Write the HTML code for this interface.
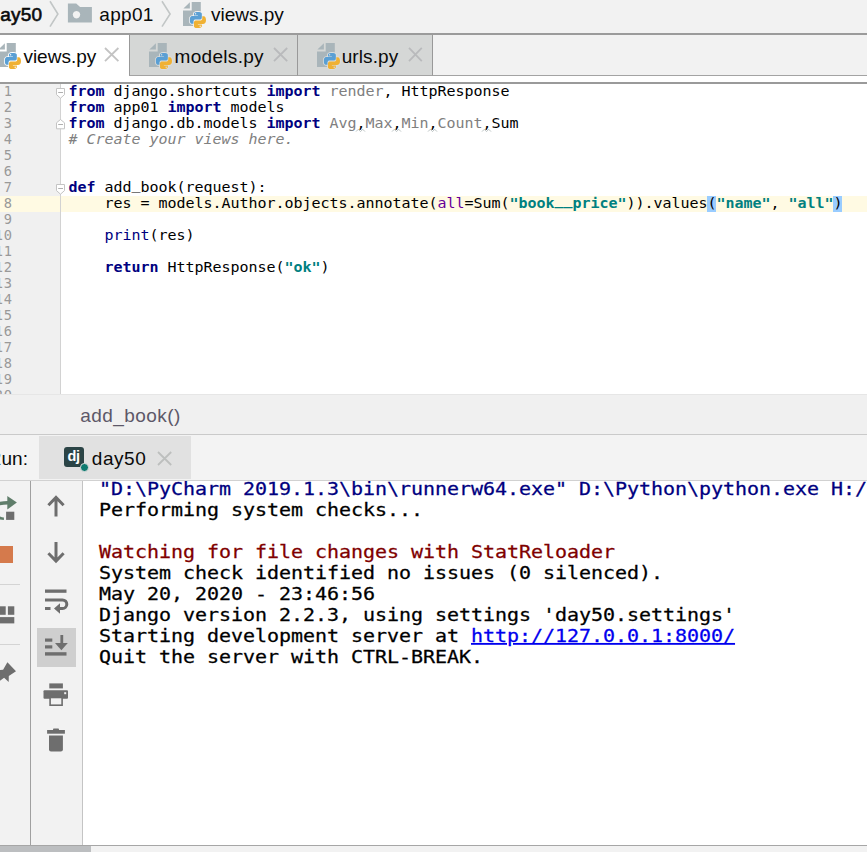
<!DOCTYPE html>
<html><head><meta charset="utf-8"><title>views.py</title>
<style>
*{box-sizing:border-box;margin:0;padding:0}
html,body{width:867px;height:852px;overflow:hidden;background:#fff}
body{position:relative;font-family:"Liberation Sans",sans-serif;color:#000}
.abs{position:absolute}
.ui{font-family:"Liberation Sans",sans-serif;font-size:19px;white-space:pre;line-height:24px;color:#0a0a0a}
.mono{font-family:"DejaVu Sans Mono","Liberation Mono",monospace;white-space:pre}
#nav{left:0;top:0;width:867px;height:33px;background:#f2f2f2}
#navline{left:0;top:33px;width:867px;height:1.7px;background:#9b9b9b}
#strip{left:129px;top:34.7px;width:738px;height:41.3px;background:#f2f2f2;border-bottom:1px solid #a3a3a3}
.tab{top:34.7px;height:41.3px;background:#d5d7d6;border-right:1.2px solid #999;border-bottom:1px solid #a3a3a3}
#edline{left:0;top:82px;width:867px;height:1.7px;background:#9a9a9a}
#gutter{left:0;top:84px;width:60px;height:310px;background:#f0f0f0}
#gline{left:60px;top:83.7px;width:1px;height:310.3px;background:#d2d2d2}
#caret{left:0;top:196px;width:867px;height:16px;background:#fffae3}
.ln{left:-5px;width:18px;text-align:left;font-size:13.7px;letter-spacing:0.75px;line-height:16px;color:#999;height:16px}
.cl{left:68.4px;font-size:15px;line-height:16px;height:16px;color:#000;letter-spacing:-0.031px;transform:scaleY(0.94);transform-origin:0 13.2px}
.k{color:#000080;font-weight:bold}
.s{color:#008080;font-weight:bold}
.g{color:#808080}
.c{color:#808080;font-style:italic}
.p{color:#660099}
.b{color:#000080}
.u{position:relative;top:-3px}
.brk{top:196px;width:9px;height:16px;background:#99ccff}
#crumb{left:0;top:394px;width:867px;height:40px;background:#f0f0f0;border-top:1px solid #e6e6e6}
#crumbline{left:0;top:434px;width:867px;height:1px;background:#cacaca}
#runbar{left:0;top:435px;width:867px;height:45px;background:#f3f3f3}
#runtab{left:39px;top:436.2px;width:152px;height:42.4px;background:#e1e1e1}
#runline{left:0;top:480px;width:867px;height:1px;background:#d1d1d1}
#lt1{left:0;top:481px;width:30px;height:364px;background:#f2f2f2}
#lt1b{left:30px;top:481px;width:1px;height:364px;background:#a0a0a0}
#lt2{left:31px;top:481px;width:51px;height:364px;background:#f2f2f2}
#lt2b{left:82px;top:481px;width:1px;height:364px;background:#c4c4c4}
.con{left:99px;font-size:20px;line-height:21px;height:21px;letter-spacing:-0.041px;color:#000;transform:scaleY(0.92);transform-origin:0 17.4px;-webkit-text-stroke:0.3px}
#botline{left:0;top:845px;width:867px;height:1px;background:#a6a6a6}
#bot{left:0;top:846px;width:867px;height:6px;background:#f2f2f2}
#botl{left:0;top:846px;width:91px;height:6px;background:#bcbec0}
</style></head><body>
<div id="nav" class="abs"></div>
<div id="strip" class="abs"></div>
<div id="navline" class="abs"></div>
<div class="abs tab" style="left:129px;width:169px;border-left:1.2px solid #999"></div>
<div class="abs tab" style="left:298px;width:135px"></div>
<div id="edline" class="abs"></div>
<div id="gutter" class="abs"></div>
<div id="caret" class="abs"></div>
<div id="gline" class="abs"></div>
<div class="abs brk" style="left:707.3px"></div><div class="abs brk" style="left:833.2px"></div>
<div class="abs ui" id="t_day" style="left:-10.6px;top:3px;-webkit-text-stroke:0.6px;letter-spacing:0.25px">day50</div>
<div class="abs ui" id="t_app" style="left:99.3px;top:3px;letter-spacing:0.3px">app01</div>
<div class="abs ui" id="t_vw" style="left:211px;top:3px">views.py</div>
<div class="abs ui" id="t_tab1" style="left:23.4px;top:45px">views.py</div>
<div class="abs ui" id="t_tab2" style="left:174.6px;top:45px;letter-spacing:0.3px">models.py</div>
<div class="abs ui" id="t_tab3" style="left:341.7px;top:45px;letter-spacing:0.1px">urls.py</div>
<div id="editor" class="abs" style="left:0;top:84px;width:867px;height:310px;overflow:hidden"><div class="abs" style="left:0;top:-84px"><div class="abs mono ln" style="top:83px;left:3.7px">1</div>
<div class="abs mono ln" style="top:99px;left:3.7px">2</div>
<div class="abs mono ln" style="top:115px;left:3.7px">3</div>
<div class="abs mono ln" style="top:131px;left:3.7px">4</div>
<div class="abs mono ln" style="top:147px;left:3.7px">5</div>
<div class="abs mono ln" style="top:163px;left:3.7px">6</div>
<div class="abs mono ln" style="top:179px;left:3.7px">7</div>
<div class="abs mono ln" style="top:195px;left:3.7px">8</div>
<div class="abs mono ln" style="top:211px;left:3.7px">9</div>
<div class="abs mono ln" style="top:227px;left:-5.3px">10</div>
<div class="abs mono ln" style="top:243px;left:-5.3px">11</div>
<div class="abs mono ln" style="top:259px;left:-5.3px">12</div>
<div class="abs mono ln" style="top:275px;left:-5.3px">13</div>
<div class="abs mono ln" style="top:291px;left:-5.3px">14</div>
<div class="abs mono ln" style="top:307px;left:-5.3px">15</div>
<div class="abs mono ln" style="top:323px;left:-5.3px">16</div>
<div class="abs mono ln" style="top:339px;left:-5.3px">17</div>
<div class="abs mono ln" style="top:355px;left:-5.3px">18</div>
<div class="abs mono ln" style="top:371px;left:-5.3px">19</div>
<div class="abs mono ln" style="top:387px;left:-5.3px">20</div>
<div class="abs mono cl" style="top:83px"><span class="k">from</span> django.shortcuts <span class="k">import</span> <span class="g">render</span>, HttpResponse</div>
<div class="abs mono cl" style="top:99px"><span class="k">from</span> app01 <span class="k">import</span> models</div>
<div class="abs mono cl" style="top:115px"><span class="k">from</span> django.db.models <span class="k">import</span> <span class="g">Avg</span>,<span class="g">Max</span>,<span class="g">Min</span>,<span class="g">Count</span>,Sum</div>
<div class="abs mono cl" style="top:131px"><span class="c"># Create your views here.</span></div>
<div class="abs mono cl" style="top:179px"><span class="k">def</span> add<span class="u">_</span>book(request):</div>
<div class="abs mono cl" style="top:195px">    res = models.Author.objects.annotate(<span class="p">all</span>=Sum(<span class="s">"book<span class="u">__</span>price"</span>)).values(<span class="s">"name"</span>, <span class="s">"all"</span>)</div>
<div class="abs mono cl" style="top:227px">    <span class="b">print</span>(res)</div>
<div class="abs mono cl" style="top:259px">    <span class="k">return</span> HttpResponse(<span class="s">"ok"</span>)</div></div></div>
<div id="crumb" class="abs"></div>
<div id="crumbline" class="abs"></div>
<div id="runbar" class="abs"></div>
<div id="runtab" class="abs"></div>
<div id="runline" class="abs"></div>
<div id="lt1" class="abs"></div><div id="lt1b" class="abs"></div>
<div id="lt2" class="abs"></div><div id="lt2b" class="abs"></div>
<div class="abs" style="left:83px;top:481px;width:784px;height:364px;overflow:hidden"><div class="abs" style="left:-83px;top:-481px"><div class="abs mono con" style="top:478px;color:#000080">"D:\PyCharm 2019.1.3\bin\runnerw64.exe" D:\Python\python.exe H:/python/day50/manage.py runserver 8000</div>
<div class="abs mono con" style="top:499px;color:#000">Performing system checks...</div>
<div class="abs mono con" style="top:541px;color:#7f0000">Watching for file changes with StatReloader</div>
<div class="abs mono con" style="top:562px;color:#000">System check identified no issues (0 silenced).</div>
<div class="abs mono con" style="top:583px;color:#000">May 20, 2020 - 23:46:56</div>
<div class="abs mono con" style="top:604px;color:#000">Django version 2.2.3, using settings 'day50.settings'</div>
<div class="abs mono con" style="top:625px;color:#000">Starting development server at <span style="color:#0000ee;text-decoration:underline">http://127.0.0.1:8000/</span></div>
<div class="abs mono con" style="top:646px;color:#000">Quit the server with CTRL-BREAK.</div></div></div>
<div id="botline" class="abs"></div>
<div id="bot" class="abs"></div>
<div id="botl" class="abs"></div>
<div class="abs ui" id="t_crumb" style="left:80.2px;top:404px;color:#5d5868;letter-spacing:0.45px">add_book()</div>
<div class="abs ui" id="t_run" style="left:-12.2px;top:447px">Run:</div>
<div class="abs ui" id="t_day2" style="left:91.8px;top:447px;letter-spacing:0.55px">day50</div>
<svg class="abs" style="left:48.4px;top:0" width="11.899999999999999" height="30" viewBox="48.4 0 11.899999999999999 30"><path d="M50.4,1.2 L58.3,14 L50.4,26.7" stroke="#c2c6c6" stroke-width="1.6" fill="none"/></svg>
<svg class="abs" style="left:160.2px;top:0" width="12.100000000000023" height="30" viewBox="160.2 0 12.100000000000023 30"><path d="M162.2,1.2 L170.3,14 L162.2,26.7" stroke="#c2c6c6" stroke-width="1.6" fill="none"/></svg>
<svg class="abs" style="left:66px;top:2px" width="28" height="24" viewBox="66 2 28 24"><path fill="#a9b5ba" fill-rule="evenodd" d="M67.9,3.5 H76.2 L80.1,6.9 H91.9 V22.5 H67.9 Z M76.5,11 a3.7,3.7 0 1 0 0.001,0 Z"/></svg>
<svg class="abs" style="left:181.1px;top:-0.19999999999999996px;overflow:visible" width="30" height="32" viewBox="-2 -2 30 32">
<path fill="#a9b5ba" d="M8.7,0 H17.8 V24 H0 V8.4 H8.7 Z"/>
<path fill="#a9b5ba" d="M6.9,0.3 V6.6 H0.4 Z"/>
<g transform="translate(5.64,8.74) scale(1.1571)">
<path d="M7.9,1 C4.4,1 4.6,2.5 4.6,2.5 L4.6,4.1 L8,4.1 L8,4.6 L3.3,4.6 C3.3,4.6 1,4.3 1,7.9 C1,11.4 3,11.3 3,11.3 L4.2,11.3 L4.2,9.6 C4.2,9.6 4.1,7.6 6.1,7.6 L9.5,7.6 C9.5,7.6 11.4,7.7 11.4,5.8 L11.4,2.7 C11.4,2.7 11.7,1 7.9,1 Z M6,2 C6.4,2 6.6,2.3 6.6,2.6 C6.6,3 6.4,3.2 6,3.2 C5.7,3.2 5.4,3 5.4,2.6 C5.4,2.3 5.7,2 6,2 Z" fill="#f2f2f2" stroke="#f2f2f2" stroke-width="1.5" stroke-linejoin="round"/>
<path d="M8.1,15 C11.6,15 11.4,13.5 11.4,13.5 L11.4,11.9 L8,11.9 L8,11.4 L12.7,11.4 C12.7,11.4 15,11.7 15,8.1 C15,4.6 13,4.7 13,4.7 L11.8,4.7 L11.8,6.4 C11.8,6.4 11.9,8.4 9.9,8.4 L6.5,8.4 C6.5,8.4 4.6,8.3 4.6,10.2 L4.6,13.3 C4.6,13.3 4.3,15 8.1,15 Z M10,14 C9.6,14 9.4,13.7 9.4,13.4 C9.4,13 9.6,12.8 10,12.8 C10.3,12.8 10.6,13 10.6,13.4 C10.6,13.7 10.3,14 10,14 Z" fill="#f2f2f2" stroke="#f2f2f2" stroke-width="1.5" stroke-linejoin="round"/>
<path d="M7.9,1 C4.4,1 4.6,2.5 4.6,2.5 L4.6,4.1 L8,4.1 L8,4.6 L3.3,4.6 C3.3,4.6 1,4.3 1,7.9 C1,11.4 3,11.3 3,11.3 L4.2,11.3 L4.2,9.6 C4.2,9.6 4.1,7.6 6.1,7.6 L9.5,7.6 C9.5,7.6 11.4,7.7 11.4,5.8 L11.4,2.7 C11.4,2.7 11.7,1 7.9,1 Z M6,2 C6.4,2 6.6,2.3 6.6,2.6 C6.6,3 6.4,3.2 6,3.2 C5.7,3.2 5.4,3 5.4,2.6 C5.4,2.3 5.7,2 6,2 Z" fill="#5a9fd4"/>
<path d="M8.1,15 C11.6,15 11.4,13.5 11.4,13.5 L11.4,11.9 L8,11.9 L8,11.4 L12.7,11.4 C12.7,11.4 15,11.7 15,8.1 C15,4.6 13,4.7 13,4.7 L11.8,4.7 L11.8,6.4 C11.8,6.4 11.9,8.4 9.9,8.4 L6.5,8.4 C6.5,8.4 4.6,8.3 4.6,10.2 L4.6,13.3 C4.6,13.3 4.3,15 8.1,15 Z M10,14 C9.6,14 9.4,13.7 9.4,13.4 C9.4,13 9.6,12.8 10,12.8 C10.3,12.8 10.6,13 10.6,13.4 C10.6,13.7 10.3,14 10,14 Z" fill="#f0b133"/>
</g></svg>
<svg class="abs" style="left:-4.2px;top:40.8px;overflow:visible" width="30" height="32" viewBox="-2 -2 30 32">
<path fill="#a9b5ba" d="M8.7,0 H17.8 V24 H0 V8.4 H8.7 Z"/>
<path fill="#a9b5ba" d="M6.9,0.3 V6.6 H0.4 Z"/>
<g transform="translate(5.64,8.74) scale(1.1571)">
<path d="M7.9,1 C4.4,1 4.6,2.5 4.6,2.5 L4.6,4.1 L8,4.1 L8,4.6 L3.3,4.6 C3.3,4.6 1,4.3 1,7.9 C1,11.4 3,11.3 3,11.3 L4.2,11.3 L4.2,9.6 C4.2,9.6 4.1,7.6 6.1,7.6 L9.5,7.6 C9.5,7.6 11.4,7.7 11.4,5.8 L11.4,2.7 C11.4,2.7 11.7,1 7.9,1 Z M6,2 C6.4,2 6.6,2.3 6.6,2.6 C6.6,3 6.4,3.2 6,3.2 C5.7,3.2 5.4,3 5.4,2.6 C5.4,2.3 5.7,2 6,2 Z" fill="#ffffff" stroke="#ffffff" stroke-width="1.5" stroke-linejoin="round"/>
<path d="M8.1,15 C11.6,15 11.4,13.5 11.4,13.5 L11.4,11.9 L8,11.9 L8,11.4 L12.7,11.4 C12.7,11.4 15,11.7 15,8.1 C15,4.6 13,4.7 13,4.7 L11.8,4.7 L11.8,6.4 C11.8,6.4 11.9,8.4 9.9,8.4 L6.5,8.4 C6.5,8.4 4.6,8.3 4.6,10.2 L4.6,13.3 C4.6,13.3 4.3,15 8.1,15 Z M10,14 C9.6,14 9.4,13.7 9.4,13.4 C9.4,13 9.6,12.8 10,12.8 C10.3,12.8 10.6,13 10.6,13.4 C10.6,13.7 10.3,14 10,14 Z" fill="#ffffff" stroke="#ffffff" stroke-width="1.5" stroke-linejoin="round"/>
<path d="M7.9,1 C4.4,1 4.6,2.5 4.6,2.5 L4.6,4.1 L8,4.1 L8,4.6 L3.3,4.6 C3.3,4.6 1,4.3 1,7.9 C1,11.4 3,11.3 3,11.3 L4.2,11.3 L4.2,9.6 C4.2,9.6 4.1,7.6 6.1,7.6 L9.5,7.6 C9.5,7.6 11.4,7.7 11.4,5.8 L11.4,2.7 C11.4,2.7 11.7,1 7.9,1 Z M6,2 C6.4,2 6.6,2.3 6.6,2.6 C6.6,3 6.4,3.2 6,3.2 C5.7,3.2 5.4,3 5.4,2.6 C5.4,2.3 5.7,2 6,2 Z" fill="#5a9fd4"/>
<path d="M8.1,15 C11.6,15 11.4,13.5 11.4,13.5 L11.4,11.9 L8,11.9 L8,11.4 L12.7,11.4 C12.7,11.4 15,11.7 15,8.1 C15,4.6 13,4.7 13,4.7 L11.8,4.7 L11.8,6.4 C11.8,6.4 11.9,8.4 9.9,8.4 L6.5,8.4 C6.5,8.4 4.6,8.3 4.6,10.2 L4.6,13.3 C4.6,13.3 4.3,15 8.1,15 Z M10,14 C9.6,14 9.4,13.7 9.4,13.4 C9.4,13 9.6,12.8 10,12.8 C10.3,12.8 10.6,13 10.6,13.4 C10.6,13.7 10.3,14 10,14 Z" fill="#f0b133"/>
</g></svg>
<svg class="abs" style="left:147px;top:40.8px;overflow:visible" width="30" height="32" viewBox="-2 -2 30 32">
<path fill="#a9b5ba" d="M8.7,0 H17.8 V24 H0 V8.4 H8.7 Z"/>
<path fill="#a9b5ba" d="M6.9,0.3 V6.6 H0.4 Z"/>
<g transform="translate(5.64,8.74) scale(1.1571)">
<path d="M7.9,1 C4.4,1 4.6,2.5 4.6,2.5 L4.6,4.1 L8,4.1 L8,4.6 L3.3,4.6 C3.3,4.6 1,4.3 1,7.9 C1,11.4 3,11.3 3,11.3 L4.2,11.3 L4.2,9.6 C4.2,9.6 4.1,7.6 6.1,7.6 L9.5,7.6 C9.5,7.6 11.4,7.7 11.4,5.8 L11.4,2.7 C11.4,2.7 11.7,1 7.9,1 Z M6,2 C6.4,2 6.6,2.3 6.6,2.6 C6.6,3 6.4,3.2 6,3.2 C5.7,3.2 5.4,3 5.4,2.6 C5.4,2.3 5.7,2 6,2 Z" fill="#dcdedd" stroke="#dcdedd" stroke-width="1.5" stroke-linejoin="round"/>
<path d="M8.1,15 C11.6,15 11.4,13.5 11.4,13.5 L11.4,11.9 L8,11.9 L8,11.4 L12.7,11.4 C12.7,11.4 15,11.7 15,8.1 C15,4.6 13,4.7 13,4.7 L11.8,4.7 L11.8,6.4 C11.8,6.4 11.9,8.4 9.9,8.4 L6.5,8.4 C6.5,8.4 4.6,8.3 4.6,10.2 L4.6,13.3 C4.6,13.3 4.3,15 8.1,15 Z M10,14 C9.6,14 9.4,13.7 9.4,13.4 C9.4,13 9.6,12.8 10,12.8 C10.3,12.8 10.6,13 10.6,13.4 C10.6,13.7 10.3,14 10,14 Z" fill="#dcdedd" stroke="#dcdedd" stroke-width="1.5" stroke-linejoin="round"/>
<path d="M7.9,1 C4.4,1 4.6,2.5 4.6,2.5 L4.6,4.1 L8,4.1 L8,4.6 L3.3,4.6 C3.3,4.6 1,4.3 1,7.9 C1,11.4 3,11.3 3,11.3 L4.2,11.3 L4.2,9.6 C4.2,9.6 4.1,7.6 6.1,7.6 L9.5,7.6 C9.5,7.6 11.4,7.7 11.4,5.8 L11.4,2.7 C11.4,2.7 11.7,1 7.9,1 Z M6,2 C6.4,2 6.6,2.3 6.6,2.6 C6.6,3 6.4,3.2 6,3.2 C5.7,3.2 5.4,3 5.4,2.6 C5.4,2.3 5.7,2 6,2 Z" fill="#5a9fd4"/>
<path d="M8.1,15 C11.6,15 11.4,13.5 11.4,13.5 L11.4,11.9 L8,11.9 L8,11.4 L12.7,11.4 C12.7,11.4 15,11.7 15,8.1 C15,4.6 13,4.7 13,4.7 L11.8,4.7 L11.8,6.4 C11.8,6.4 11.9,8.4 9.9,8.4 L6.5,8.4 C6.5,8.4 4.6,8.3 4.6,10.2 L4.6,13.3 C4.6,13.3 4.3,15 8.1,15 Z M10,14 C9.6,14 9.4,13.7 9.4,13.4 C9.4,13 9.6,12.8 10,12.8 C10.3,12.8 10.6,13 10.6,13.4 C10.6,13.7 10.3,14 10,14 Z" fill="#f0b133"/>
</g></svg>
<svg class="abs" style="left:315px;top:40.8px;overflow:visible" width="30" height="32" viewBox="-2 -2 30 32">
<path fill="#a9b5ba" d="M8.7,0 H17.8 V24 H0 V8.4 H8.7 Z"/>
<path fill="#a9b5ba" d="M6.9,0.3 V6.6 H0.4 Z"/>
<g transform="translate(5.64,8.74) scale(1.1571)">
<path d="M7.9,1 C4.4,1 4.6,2.5 4.6,2.5 L4.6,4.1 L8,4.1 L8,4.6 L3.3,4.6 C3.3,4.6 1,4.3 1,7.9 C1,11.4 3,11.3 3,11.3 L4.2,11.3 L4.2,9.6 C4.2,9.6 4.1,7.6 6.1,7.6 L9.5,7.6 C9.5,7.6 11.4,7.7 11.4,5.8 L11.4,2.7 C11.4,2.7 11.7,1 7.9,1 Z M6,2 C6.4,2 6.6,2.3 6.6,2.6 C6.6,3 6.4,3.2 6,3.2 C5.7,3.2 5.4,3 5.4,2.6 C5.4,2.3 5.7,2 6,2 Z" fill="#dcdedd" stroke="#dcdedd" stroke-width="1.5" stroke-linejoin="round"/>
<path d="M8.1,15 C11.6,15 11.4,13.5 11.4,13.5 L11.4,11.9 L8,11.9 L8,11.4 L12.7,11.4 C12.7,11.4 15,11.7 15,8.1 C15,4.6 13,4.7 13,4.7 L11.8,4.7 L11.8,6.4 C11.8,6.4 11.9,8.4 9.9,8.4 L6.5,8.4 C6.5,8.4 4.6,8.3 4.6,10.2 L4.6,13.3 C4.6,13.3 4.3,15 8.1,15 Z M10,14 C9.6,14 9.4,13.7 9.4,13.4 C9.4,13 9.6,12.8 10,12.8 C10.3,12.8 10.6,13 10.6,13.4 C10.6,13.7 10.3,14 10,14 Z" fill="#dcdedd" stroke="#dcdedd" stroke-width="1.5" stroke-linejoin="round"/>
<path d="M7.9,1 C4.4,1 4.6,2.5 4.6,2.5 L4.6,4.1 L8,4.1 L8,4.6 L3.3,4.6 C3.3,4.6 1,4.3 1,7.9 C1,11.4 3,11.3 3,11.3 L4.2,11.3 L4.2,9.6 C4.2,9.6 4.1,7.6 6.1,7.6 L9.5,7.6 C9.5,7.6 11.4,7.7 11.4,5.8 L11.4,2.7 C11.4,2.7 11.7,1 7.9,1 Z M6,2 C6.4,2 6.6,2.3 6.6,2.6 C6.6,3 6.4,3.2 6,3.2 C5.7,3.2 5.4,3 5.4,2.6 C5.4,2.3 5.7,2 6,2 Z" fill="#5a9fd4"/>
<path d="M8.1,15 C11.6,15 11.4,13.5 11.4,13.5 L11.4,11.9 L8,11.9 L8,11.4 L12.7,11.4 C12.7,11.4 15,11.7 15,8.1 C15,4.6 13,4.7 13,4.7 L11.8,4.7 L11.8,6.4 C11.8,6.4 11.9,8.4 9.9,8.4 L6.5,8.4 C6.5,8.4 4.6,8.3 4.6,10.2 L4.6,13.3 C4.6,13.3 4.3,15 8.1,15 Z M10,14 C9.6,14 9.4,13.7 9.4,13.4 C9.4,13 9.6,12.8 10,12.8 C10.3,12.8 10.6,13 10.6,13.4 C10.6,13.7 10.3,14 10,14 Z" fill="#f0b133"/>
</g></svg>
<svg class="abs" style="left:103.2px;top:46.3px" width="17.39999999999999" height="17.200000000000003" viewBox="103.2 46.3 17.39999999999999 17.200000000000003"><path d="M105.2,48.3 L118.6,61.5 M118.6,48.3 L105.2,61.5" stroke="#c3c3c3" stroke-width="1.8" fill="none"/></svg>
<svg class="abs" style="left:271.6px;top:46.4px" width="17.19999999999999" height="17.200000000000003" viewBox="271.6 46.4 17.19999999999999 17.200000000000003"><path d="M273.6,48.4 L286.8,61.6 M286.8,48.4 L273.6,61.6" stroke="#b9babc" stroke-width="1.8" fill="none"/></svg>
<svg class="abs" style="left:406.5px;top:46.4px" width="16.80000000000001" height="17.200000000000003" viewBox="406.5 46.4 16.80000000000001 17.200000000000003"><path d="M408.5,48.4 L421.3,61.6 M421.3,48.4 L408.5,61.6" stroke="#b9babc" stroke-width="1.8" fill="none"/></svg>
<svg class="abs" style="left:156.2px;top:449.6px" width="17.200000000000017" height="17.0" viewBox="156.2 449.6 17.200000000000017 17.0"><path d="M158.2,451.6 L171.4,464.6 M171.4,451.6 L158.2,464.6" stroke="#bdbfbe" stroke-width="1.8" fill="none"/></svg>
<svg class="abs" style="left:355.0px;top:127px" width="12" height="6" viewBox="355.0 127 12 6"><path d="M356.0,131.6 l2.25,-2.3 l2.25,2.3 l2.25,-2.3 l2.25,2.3" stroke="#b4bcbc" stroke-width="0.9" fill="none"/></svg>
<svg class="abs" style="left:391.0px;top:127px" width="12" height="6" viewBox="391.0 127 12 6"><path d="M392.0,131.6 l2.25,-2.3 l2.25,2.3 l2.25,-2.3 l2.25,2.3" stroke="#b4bcbc" stroke-width="0.9" fill="none"/></svg>
<svg class="abs" style="left:427.0px;top:127px" width="12" height="6" viewBox="427.0 127 12 6"><path d="M428.0,131.6 l2.25,-2.3 l2.25,2.3 l2.25,-2.3 l2.25,2.3" stroke="#b4bcbc" stroke-width="0.9" fill="none"/></svg>
<svg class="abs" style="left:481.0px;top:127px" width="12" height="6" viewBox="481.0 127 12 6"><path d="M482.0,131.6 l2.25,-2.3 l2.25,2.3 l2.25,-2.3 l2.25,2.3" stroke="#b4bcbc" stroke-width="0.9" fill="none"/></svg>
<svg class="abs" style="left:54px;top:84px" width="14" height="16" viewBox="54 0 14 16"><path d="M56.5,4.5 H64.5 V10.6 L60.5,14.2 L56.5,10.6 Z" fill="#fff" stroke="#c4c4c4" stroke-width="1"/><path d="M58.2,8.5 H63" stroke="#b0b0b0" stroke-width="1"/></svg>
<svg class="abs" style="left:54px;top:116px" width="14" height="16" viewBox="54 0 14 16"><path d="M56.5,12.8 H64.5 V6.8 L60.5,3.5 L56.5,6.8 Z" fill="#fff" stroke="#c4c4c4" stroke-width="1"/><path d="M58.2,8.5 H63" stroke="#b0b0b0" stroke-width="1"/></svg>
<svg class="abs" style="left:54px;top:180px" width="14" height="16" viewBox="54 0 14 16"><path d="M56.5,4.5 H64.5 V10.6 L60.5,14.2 L56.5,10.6 Z" fill="#fff" stroke="#c4c4c4" stroke-width="1"/><path d="M58.2,8.5 H63" stroke="#b0b0b0" stroke-width="1"/></svg>
<div class="abs" style="left:63.5px;top:446.5px;width:20.5px;height:20.5px;border-radius:3px;background:#2b4446"></div>
<div class="abs" id="t_dj" style="left:67.4px;top:445.6px;font-family:'Liberation Sans',sans-serif;font-weight:bold;font-size:14.5px;line-height:20px;color:#fff;letter-spacing:-0.2px">dj</div>
<div class="abs" style="left:80.3px;top:463.3px;width:8.6px;height:8.6px;border-radius:50%;background:#0e7b70;border:0.8px solid #e0e0e0"></div>
<svg class="abs" style="left:44px;top:492.6px" width="24" height="26.399999999999977" viewBox="44 492.6 24 26.399999999999977"><path d="M56,497.1 V516 M48.4,504.90000000000003 L56,497.1 L63.6,504.90000000000003" stroke="#6e6e6e" stroke-width="3" fill="none"/></svg>
<svg class="abs" style="left:44px;top:539.4px" width="24" height="26.600000000000023" viewBox="44 539.4 24 26.600000000000023"><path d="M56,542.4 V561.5 M48.4,553.7 L56,561.5 L63.6,553.7" stroke="#6e6e6e" stroke-width="3" fill="none"/></svg>
<svg class="abs" style="left:43px;top:587px" width="28" height="30" viewBox="43 587 28 30">
<rect x="45" y="589.5" width="21.5" height="3.3" fill="#6e6e6e"/>
<path d="M45,599.9 H62.5 a4.2,4.2 0 0 1 0,8.6 H59" stroke="#6e6e6e" stroke-width="3" fill="none"/>
<path d="M54,608.5 L60,603.2 V613.8 Z" fill="#6e6e6e"/>
<rect x="45" y="607" width="5.5" height="3" fill="#6e6e6e"/>
</svg>
<div class="abs" style="left:37px;top:628px;width:39px;height:39px;background:#cfcfcf"></div>
<svg class="abs" style="left:43px;top:632px" width="28" height="28" viewBox="43 632 28 28">
<rect x="45" y="638.5" width="7.3" height="3.2" fill="#6e6e6e"/>
<rect x="45" y="645.3" width="7.3" height="3.2" fill="#6e6e6e"/>
<rect x="45" y="652.2" width="21.5" height="3.4" fill="#6e6e6e"/>
<rect x="60.4" y="635" width="2.8" height="9" fill="#6e6e6e"/>
<path d="M55,643 H67.8 L61.4,650.2 Z" fill="#6e6e6e"/>
</svg>
<svg class="abs" style="left:41px;top:681px" width="30" height="28" viewBox="41 681 30 28">
<rect x="49.3" y="683.4" width="13.6" height="5" fill="#6e6e6e"/>
<rect x="43.5" y="690.3" width="24.5" height="8.4" rx="1" fill="#6e6e6e"/>
<rect x="50.1" y="697.5" width="12" height="7.7" fill="#f2f2f2" stroke="#6e6e6e" stroke-width="1.6"/>
<rect x="64.2" y="692.2" width="2" height="2" fill="#f2f2f2"/>
</svg>
<svg class="abs" style="left:45px;top:726px" width="24" height="28" viewBox="45 726 24 28">
<rect x="47.1" y="730" width="17.8" height="3.7" fill="#6e6e6e"/>
<rect x="53" y="728.4" width="6" height="2" rx="0.8" fill="#6e6e6e"/>
<path d="M49,735.4 H62.9 V749.5 a2,2 0 0 1 -2,2 H51 a2,2 0 0 1 -2,-2 Z" fill="#6e6e6e"/>
</svg>
<svg class="abs" style="left:0;top:492px" width="22" height="32" viewBox="0 492 22 32">
<path d="M-1,502 Q3,501.1 8,501.1 V504.4 Q3,504.4 -1,505.6 Z" fill="#5f7d6a"/>
<path d="M7.3,496 L16.9,502.6 L7.3,509.4 Z" fill="#5f7d6a"/>
<path d="M-1,516 Q1.5,517.2 3.9,517.4 V519.9 Q1.5,519.9 -1,519.4 Z" fill="#5f7d6a"/>
<rect x="6.1" y="511.7" width="8.2" height="8.2" fill="#6e6e6e"/>
</svg>
<div class="abs" style="left:0;top:546.3px;width:12.8px;height:17.2px;background:#d57a4c"></div>
<div class="abs" style="left:0;top:584px;width:20px;height:1px;background:#d4d4d4"></div>
<div class="abs" style="left:0;top:644px;width:20px;height:1px;background:#d4d4d4"></div>
<svg class="abs" style="left:0;top:604px" width="18" height="22" viewBox="0 604 18 22">
<rect x="-2" y="606.3" width="7.7" height="8.5" fill="#6e6e6e"/>
<rect x="7.9" y="606.3" width="6.4" height="8.5" fill="#6e6e6e"/>
<rect x="-2" y="617.1" width="16.3" height="6.3" fill="#6e6e6e"/>
</svg>
<svg class="abs" style="left:0;top:658px" width="20" height="28" viewBox="0 658 20 28">
<path d="M7.4,662.2 L16,671.2 L8.8,676 L8.7,682.1 L4.1,677.8 L-1,681.5 L-1,670 L3.1,669.8 Z" fill="#6e6e6e"/>
</svg>
</body></html>
